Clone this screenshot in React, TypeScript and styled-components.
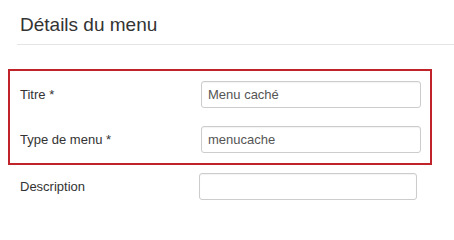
import React from "react";
import styled, { createGlobalStyle } from "styled-components";

const Global = createGlobalStyle`
  html, body { margin: 0; padding: 0; background: #fff; }
  body {
    font-family: "Liberation Sans", Arial, Helvetica, sans-serif;
    color: #333;
    width: 454px;
    height: 228px;
    overflow: hidden;
  }
`;

const Page = styled.div`
  padding-top: 14px;
`;

const Heading = styled.h3`
  margin: 0 0 0 17px;
  padding: 0 0 8px 3px;
  font-size: 19px;
  line-height: 22px;
  font-weight: normal;
  color: #333;
  border-bottom: 1px solid #e5e5e5;
`;

const Highlight = styled.div`
  margin: 24px 0 0 8px;
  width: 424px;
  box-sizing: border-box;
  border: 2px solid #c1232a;
  padding: 10px 9px 10px 10px;
  display: flex;
  flex-direction: column;
  gap: 18px;
`;

const Row = styled.div<{ $labelWidth: number; $inputWidth: number }>`
  display: grid;
  grid-template-columns: ${(p) => p.$labelWidth}px ${(p) => p.$inputWidth}px;
  align-items: center;
`;

const Loose = styled.div`
  padding: 8px 0 0 20px;
`;

const Label = styled.label`
  font-size: 13px;
  color: #333;
  line-height: 18px;
`;

const Input = styled.input`
  box-sizing: border-box;
  width: 100%;
  height: 27px;
  margin: 0;
  padding: 0 6px;
  font-family: "Liberation Sans", Arial, Helvetica, sans-serif;
  font-size: 13px;
  color: #555;
  background: #fff;
  border: 1px solid #ccc;
  border-radius: 3px;
  box-shadow: inset 0 1px 1px rgba(0, 0, 0, 0.05);
  outline: none;
`;

export default function App() {
  return (
    <>
      <Global />
      <Page>
        <Heading>Détails du menu</Heading>
        <Highlight>
          <Row $labelWidth={181} $inputWidth={220}>
            <Label>Titre *</Label>
            <Input defaultValue="Menu caché" />
          </Row>
          <Row $labelWidth={181} $inputWidth={220}>
            <Label>Type de menu *</Label>
            <Input defaultValue="menucache" />
          </Row>
        </Highlight>
        <Loose>
          <Row $labelWidth={179} $inputWidth={218}>
            <Label>Description</Label>
            <Input defaultValue="" />
          </Row>
        </Loose>
      </Page>
    </>
  );
}
